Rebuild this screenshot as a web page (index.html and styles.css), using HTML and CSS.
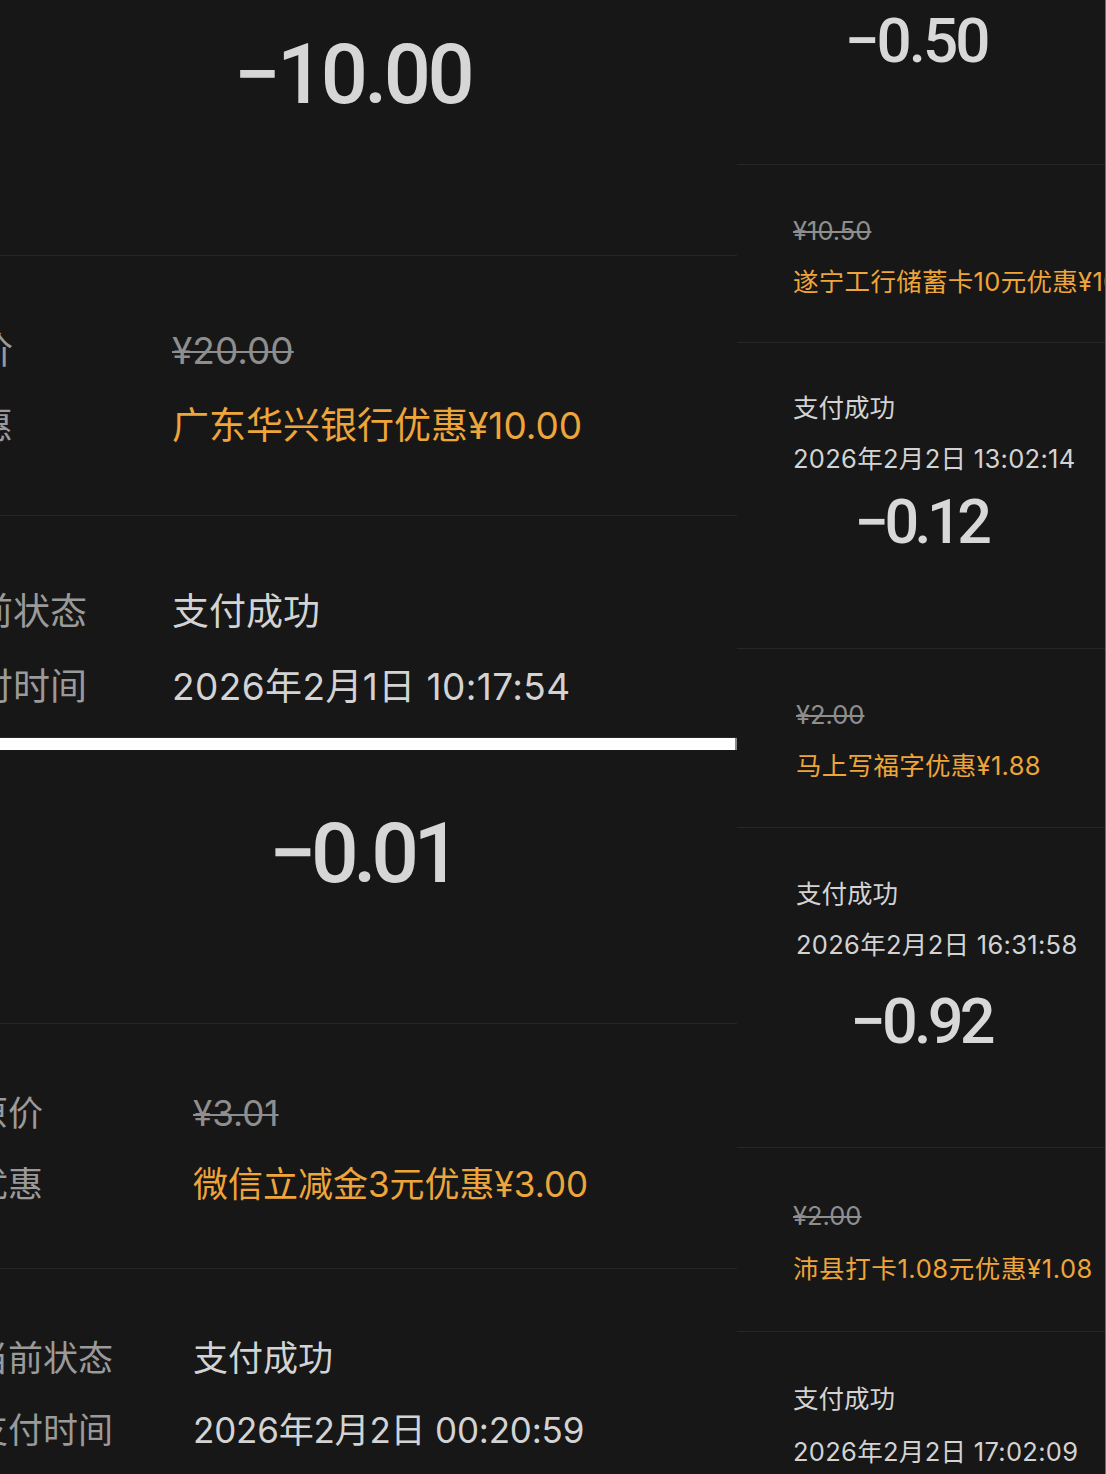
FILE: index.html
```html
<!DOCTYPE html>
<html lang="zh-CN">
<head>
<meta charset="utf-8">
<title>支付记录</title>
<link rel="stylesheet" href="styles.css">
</head>
<body>
<div class="collage">
  <div class="col-left">
    <section class="shot shot-a">
      <div class="amount-block a-amount"><span class="amount">−10.00</span></div>
      <div class="info a-info1">
        <div class="row"><span class="label">原价</span><span class="value strike">¥20.00</span></div>
        <div class="row"><span class="label">优惠</span><span class="value promo">广东华兴银行优惠¥10.00</span></div>
      </div>
      <div class="info a-info2">
        <div class="row"><span class="label">当前状态</span><span class="value">支付成功</span></div>
        <div class="row"><span class="label">支付时间</span><span class="value date">2026年2月1日 10:17:54</span></div>
      </div>
    </section>
    <div class="seam"></div>
    <section class="shot shot-b">
      <div class="amount-block b-amount"><span class="amount">−0.01</span></div>
      <div class="info b-info1">
        <div class="row"><span class="label">原价</span><span class="value strike">¥3.01</span></div>
        <div class="row"><span class="label">优惠</span><span class="value promo">微信立减金3元优惠¥3.00</span></div>
      </div>
      <div class="info b-info2">
        <div class="row"><span class="label">当前状态</span><span class="value">支付成功</span></div>
        <div class="row"><span class="label">支付时间</span><span class="value date">2026年2月2日 00:20:59</span></div>
      </div>
    </section>
  </div>
  <div class="col-right">
    <div class="rsec r1"><div class="ramount r1-amount">−0.50</div></div>
    <div class="rsec r2">
      <div class="rline strike">¥10.50</div>
      <div class="rline promo">遂宁工行储蓄卡10元优惠¥10.00</div>
    </div>
    <div class="rsec r3">
      <div class="rline">支付成功</div>
      <div class="rline date">2026年2月2日 13:02:14</div>
      <div class="ramount r3-amount">−0.12</div>
    </div>
    <div class="rsec r4 shifted">
      <div class="rline strike">¥2.00</div>
      <div class="rline promo">马上写福字优惠¥1.88</div>
    </div>
    <div class="rsec r5 shifted">
      <div class="rline">支付成功</div>
      <div class="rline date">2026年2月2日 16:31:58</div>
      <div class="ramount r5-amount">−0.92</div>
    </div>
    <div class="rsec r6 tall">
      <div class="rline strike">¥2.00</div>
      <div class="rline promo">沛县打卡1.08元优惠¥1.08</div>
    </div>
    <div class="rsec r7 tall">
      <div class="rline">支付成功</div>
      <div class="rline date">2026年2月2日 17:02:09</div>
    </div>
  </div>
</div>
</body>
</html>
```
FILE: styles.css
```css
html, body {
  margin: 0;
  padding: 0;
  background: #171717;
}
body {
  width: 1106px;
  height: 1474px;
  overflow: hidden;
  font-family: "Inter", "Noto Sans CJK SC", sans-serif;
  color: #d3d3d3;
}
.collage {
  display: grid;
  grid-template-columns: 737px 369px;
  height: 1474px;
}
.col-left {
  display: flex;
  flex-direction: column;
  overflow: hidden;
}
.shot {
  display: flex;
  flex-direction: column;
  background: #171717;
}
.shot-a { height: 738px; }
.shot-b { height: 724px; }
.seam {
  height: 12px;
  background: #ffffff;
  border-right: 2px solid #8a8a8a;
  box-sizing: border-box;
}
.amount-block {
  box-sizing: border-box;
  border-bottom: 1px solid #272727;
  display: flex;
  justify-content: center;
}
.amount {
  font-family: "Roboto", sans-serif;
  font-weight: 500;
  color: #d6d6d6;
  white-space: nowrap;
}
.a-amount {
  height: 256px;
  padding: 33px 32px 0 0;
}
.a-amount .amount {
  font-size: 83px;
  line-height: 83px;
  letter-spacing: -3.5px;
}
.b-amount {
  height: 274px;
  padding: 62px 12px 0 0;
}
.b-amount .amount {
  font-size: 84px;
  line-height: 84px;
  letter-spacing: -5.5px;
}
.info {
  box-sizing: border-box;
  display: flex;
  flex-direction: column;
}
.a-info1, .a-info2, .b-info1 {
  border-bottom: 1px solid #272727;
}
.a-info1 { height: 260px; padding-top: 57px; }
.a-info2 { height: 222px; padding-top: 58px; }
.b-info1 { height: 245px; padding-top: 54px; }
.b-info2 { height: 205px; padding-top: 53px; }
.row {
  display: flex;
  white-space: nowrap;
}
.shot-a .row {
  margin-left: -61px;
  font-size: 37px;
  line-height: 75px;
}
.shot-a .label { width: 233px; }
.shot-a .date { letter-spacing: 0.4px; }
.shot-b .row {
  margin-left: -27px;
  font-size: 35px;
  line-height: 71px;
}
.shot-b .b-info2 .row { line-height: 72px; }
.shot-b .label { width: 220px; }
.shot-b .date { letter-spacing: -0.2px; }
.label {
  color: #9a9a9a;
  flex: none;
}
.value { color: #d3d3d3; }
.strike {
  color: #8e8e8e;
  text-decoration: line-through;
  text-decoration-thickness: 2px;
}
.promo { color: #eea53a; }

.col-right {
  display: flex;
  flex-direction: column;
  border-right: 1px solid #6e6e6e;
  overflow: hidden;
}
.rsec {
  box-sizing: border-box;
  border-bottom: 1px solid #272727;
  padding-left: 56px;
  display: flex;
  flex-direction: column;
  font-size: 25.5px;
}
.rsec.shifted { padding-left: 59px; }
.rline {
  line-height: 51px;
  white-space: nowrap;
}
.rline.promo { letter-spacing: 0.3px; }
.rline.date { letter-spacing: 0.3px; }
.rsec.tall .rline { line-height: 53px; }
.rsec.tall .rline.promo { letter-spacing: 0.6px; }
.ramount {
  font-family: "Roboto", sans-serif;
  font-weight: 500;
  color: #d8d8d8;
  align-self: stretch;
  text-align: center;
  white-space: nowrap;
}
.r1 { height: 165px; padding: 10px 0 0 0; }
.r1-amount { font-size: 62px; line-height: 62px; padding-right: 10px; letter-spacing: -3px; }
.r2 { height: 178px; padding-top: 40px; }
.r3 { height: 306px; padding-top: 39px; }
.r3-amount { font-size: 61px; line-height: 63px; margin: 7px 0 0 -56px; letter-spacing: -4.5px; }
.r4 { height: 179px; padding-top: 40px; }
.r5 { height: 320px; padding-top: 40px; }
.r5-amount { font-size: 63px; line-height: 63px; margin: 20px 0 0 -59px; letter-spacing: -3.8px; }
.r6 { height: 184px; padding-top: 41px; }
.r7 { height: 142px; padding-top: 40px; border-bottom: none; }
```
